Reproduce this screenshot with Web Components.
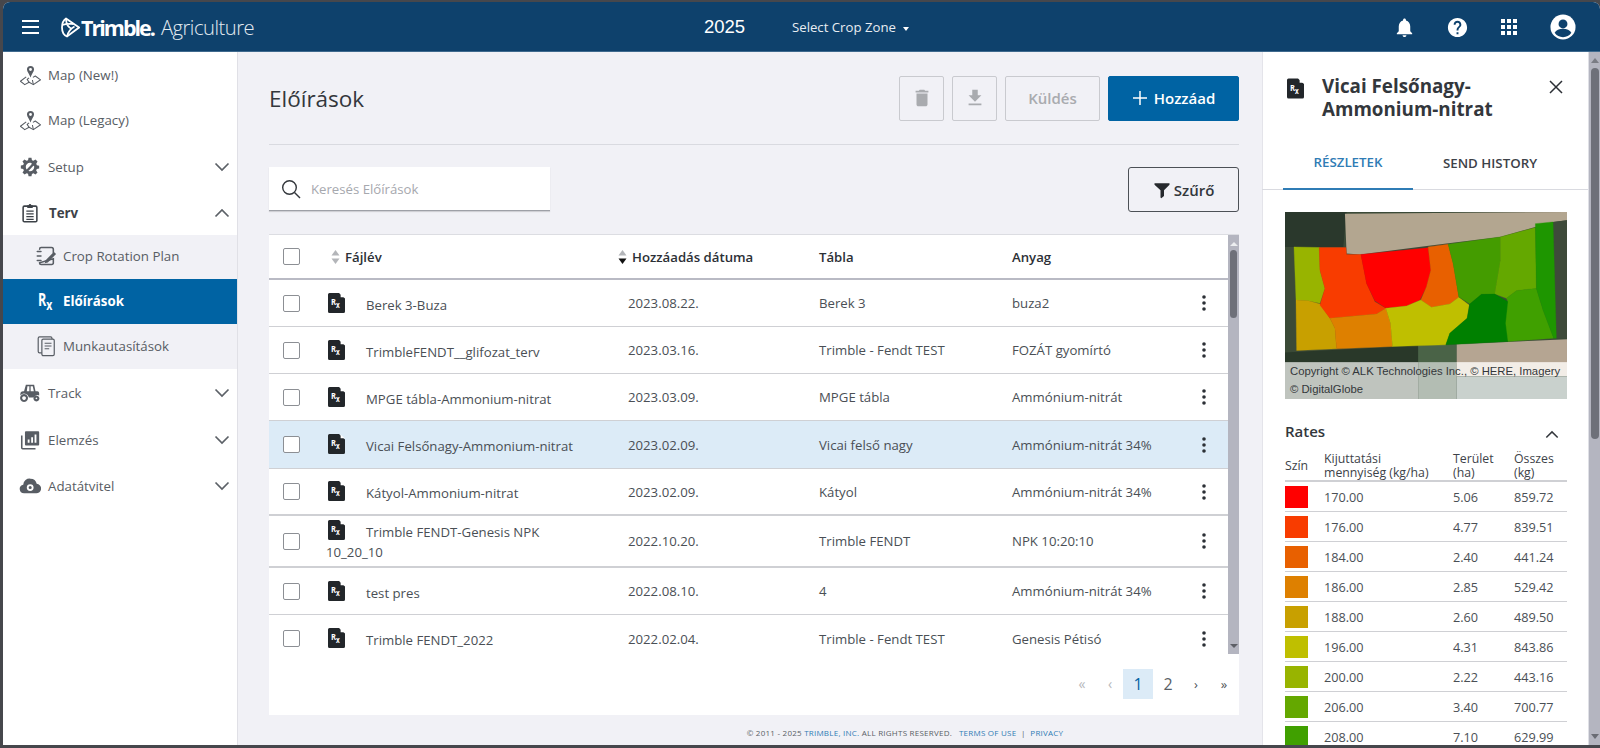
<!DOCTYPE html>
<html lang="hu"><head><meta charset="utf-8"><title>Előírások</title>
<style>
html,body{margin:0;height:100%;overflow:hidden;background:#46474c;font-family:"Open Sans",sans-serif;color:#464b52}
</style></head><body>
<tm-app></tm-app>
<script>
const I={
 bell:'<path d="M12 22c1.1 0 2-.9 2-2h-4c0 1.1.9 2 2 2zm6-6v-5c0-3.07-1.63-5.64-4.5-6.32V4c0-.83-.67-1.5-1.5-1.5s-1.5.67-1.5 1.5v.68C7.64 5.36 6 7.92 6 11v5l-2 2v1h16v-1l-2-2z"/>',
 help:'<path d="M12 2C6.48 2 2 6.48 2 12s4.48 10 10 10 10-4.48 10-10S17.52 2 12 2zm1 17h-2v-2h2v2zm2.07-7.75l-.9.92C13.45 12.9 13 13.5 13 15h-2v-.5c0-1.1.45-2.1 1.17-2.83l1.24-1.26c.37-.36.59-.86.59-1.41 0-1.1-.9-2-2-2s-2 .9-2 2H8c0-2.21 1.79-4 4-4s4 1.79 4 4c0 .88-.36 1.68-.93 2.25z"/>',
 apps:'<path d="M4 8h4V4H4v4zm6 12h4v-4h-4v4zm-6 0h4v-4H4v4zm0-6h4v-4H4v4zm6 0h4v-4h-4v4zm6-10v4h4V4h-4zm-6 4h4V4h-4v4zm6 6h4v-4h-4v4zm0 6h4v-4h-4v4z"/>',
 trash:'<path d="M6 19c0 1.1.9 2 2 2h8c1.1 0 2-.9 2-2V7H6v12zM19 4h-3.5l-1-1h-5l-1 1H5v2h14V4z"/>',
 dl:'<path d="M19 9h-4V3H9v6H5l7 7 7-7zM5 18v2h14v-2H5z"/>',
 filter:'<path d="M2 3h20v2l-7.300 7.300V20L11 23l-1-1V12.300L2 5z"/>',
 map:'<g fill="none" stroke="currentColor" stroke-width="1.1" stroke-linejoin="round"><path d="M7.500 13.500 1.500 18l4.500 3.500 4.500-2.500 4.500 2.500 7.500-5-5.500-4-2.500 1.500"/><path d="M10.500 19 8.500 16l2-1.500M15 21.500l-1-4.800"/></g><path fill="currentColor" d="M12 2a3.700 3.700 0 0 1 3.700 3.700c0 2.300-2.700 5-3.700 8.300-1-3.300-3.700-6-3.700-8.300A3.700 3.700 0 0 1 12 2zm0 2.200a1.500 1.500 0 1 0 0 3 1.500 1.500 0 0 0 0-3z"/>',
 setup:'<path fill="currentColor" d="M10.400 2h3.200l.5 2.600 1.600.7 2.300-1.400 2.200 2.200-1.400 2.300.7 1.600 2.500.5v3.200l-2.600.5-.7 1.600 1.500 2.200-2.200 2.300-2.300-1.500-1.600.7-.5 2.500h-3.200l-.5-2.600-1.600-.7-2.200 1.500-2.300-2.300 1.500-2.200-.7-1.600L2 13.600v-3.200l2.600-.5.7-1.600-1.500-2.300L6 3.800l2.300 1.500 1.600-.7zM12 7.400a4.600 4.600 0 1 0 0 9.200 4.600 4.600 0 0 0 0-9.200z"/><path fill="none" stroke="currentColor" stroke-width="2.600" d="M7 18 15.500 9"/><circle cx="16" cy="8.400" r="2.300" fill="currentColor"/>',
 clip:'<g fill="none" stroke="currentColor" stroke-width="1.700"><rect x="4.500" y="4.500" width="15" height="17" rx="1.400"/><path stroke-width="1.200" d="M8 10h8M8 13h8M8 16h8M8 19h8"/></g><path fill="currentColor" d="M9 5V3.500h1.600a1.400 1.400 0 0 1 2.800 0H15v3H9z"/>',
 crop:'<g fill="none" stroke="currentColor" stroke-width="1.700" stroke-linecap="round"><path d="M5 4.500A1.700 1.700 0 0 1 6.700 2.800H18A2 2 0 0 1 20 4.800V9M20 15v4.500a1.700 1.700 0 0 1-1.700 1.700H6.700A1.700 1.700 0 0 1 5 19.500z"/><path d="M2.500 7h4M2.500 12h4M2.500 17h4"/></g><path fill="currentColor" d="M20.600 7.500 23 9.900 14 19l-3.400 1 1-3.400z"/>',
 docs:'<g fill="none" stroke="currentColor" stroke-width="1.300"><rect x="7.500" y="4.500" width="13.500" height="18" rx="1.500"/><path d="M7.500 19.500H5a1.500 1.500 0 0 1-1.500-1.500V3.500A1.500 1.500 0 0 1 5 2h12a1.500 1.500 0 0 1 1.500 1.500v1"/><path d="M10.500 9h7.500M10.500 12h7.500M10.500 15h5"/></g>',
 tractor:'<path fill="currentColor" d="M7.500 3h9l1.500 7h2a2 2 0 0 1 2 2v2.600a4 4 0 0 0-5.500 2.400h-5.700a5.300 5.300 0 0 0-9.300-2.400V13a3 3 0 0 1 3-3h1zm1.700 1.600L8.500 10h2.800V4.600zm3.500 0V10h3.500l-1.200-5.400z"/><path fill="none" stroke="currentColor" stroke-width="2.300" d="M5.500 14.300a3.200 3.200 0 1 0 .01 0zM19 15.800a2.100 2.100 0 1 0 .01 0z"/>',
 chart:'<path fill="none" stroke="currentColor" stroke-width="1.700" d="M3 7v13.500a1 1 0 0 0 1 1h14"/><path fill="currentColor" d="M7.500 2.500H21a1 1 0 0 1 1 1V17a1 1 0 0 1-1 1H7.500a1 1 0 0 1-1-1V3.500a1 1 0 0 1 1-1zM9.500 11.500V15H11.500v-3.500zM13.300 9V15h2V9zM17 6v9h2V6z" fill-rule="evenodd"/>',
 cloud:'<path fill="currentColor" fill-rule="evenodd" d="M12.500 4a7 7 0 0 1 6.800 5.600A5.200 5.200 0 0 1 18.500 20H5.500a4.800 4.800 0 0 1-.9-9.500A7 7 0 0 1 12.500 4zm-.3 6a3.700 3.700 0 1 0 0 7.400 3.700 3.700 0 0 0 0-7.400zm0 2a1.700 1.700 0 1 1 0 3.400 1.700 1.700 0 0 1 0-3.400z"/>'
};
const svg=(n,s=24,extra='')=>`<svg width="${s}" height="${s}" viewBox="0 0 24 24" fill="currentColor" ${extra}>${I[n]}</svg>`;
const chev=d=>`<svg width="16" height="10" viewBox="0 0 16 10" fill="none" stroke="currentColor" stroke-width="1.700"><path d="${d=='up'?'M1.500 8.500 8 2l6.500 6.500':'M1.500 1.500 8 8l6.500-6.500'}"/></svg>`;
const rxDoc=(w,h)=>`<svg width="${w}" height="${h}" viewBox="0 0 17 20" aria-hidden="true"><path fill="#22262a" d="M1.500 0H11l6 5.500V18.500a1.500 1.500 0 0 1-1.500 1.500H1.500A1.500 1.500 0 0 1 0 18.500V1.500A1.500 1.500 0 0 1 1.500 0z"/><path fill="#fff" d="M12.600 0.400 16.800 4.300H12.600z"/><text transform="translate(3 12) scale(.8 1)" font-family="Open Sans" font-weight="700" font-size="9.500" fill="#fff">R<tspan dy="3" font-size="8">x</tspan></text></svg>`;
class Base extends HTMLElement{
 constructor(){super();this.attachShadow({mode:'open'})}
 connectedCallback(){this.shadowRoot.innerHTML=`<style>${this.css()}</style>${this.html()}`}
 css(){return ':host{display:block}'} html(){return '<slot></slot>'}
 a(n,d=''){return this.getAttribute(n)??d}
}
const def=(n,c)=>customElements.define(n,c);

def('tm-app',class extends Base{
 css(){return `:host{display:flex;flex-direction:column;height:743px;margin:2px 0 0 3px;background:#fff;border-radius:7px 7px 0 0;overflow:hidden}
 .b{display:flex;flex:1;min-height:0}`}
 html(){return `<tm-header></tm-header><div class="b"><tm-sidebar></tm-sidebar><tm-main></tm-main><tm-detail></tm-detail><tm-vscroll></tm-vscroll></div>`}
});

def('tm-header',class extends Base{
 css(){return `:host{display:flex;align-items:center;height:50px;background:#0e416c;color:#fff;flex:none;box-shadow:inset 0 -1px 0 #3f6a8e}
 .ham{margin-left:19px;display:flex;flex-direction:column;gap:4px;width:17px}
 .ham i{display:block;height:2px;background:#fff}
 .logo{margin-left:22px;display:flex;align-items:center;width:194px;flex:none}
 .logo svg{flex:none}
 .tr{font-weight:700;font-size:21.500px;letter-spacing:-2px;margin-left:1px}
 .ag{font-weight:300;font-size:20.200px;letter-spacing:-.500px;margin-left:7px;color:#e4ebf1}
 .yr{font:18.500px "Liberation Sans",sans-serif;margin-left:449px;width:42px}
 .cz{margin-left:46px;font-size:13.200px;font-weight:500;color:#e8edf2;display:flex;align-items:center;white-space:nowrap}
 .cz i{margin-left:7px;border:3.500px solid transparent;border-top:4px solid #fff;margin-top:4px;border-bottom:0}
 .r{margin-left:auto;display:flex;align-items:center;color:#fff;margin-right:24px}
 .r svg{display:block}`}
 html(){return `<div class="ham"><i></i><i></i><i></i></div>
 <div class="logo"><svg width="19" height="21" viewBox="0 0 19 21" fill="none" stroke="#fff" stroke-width="1.800"><path d="M5 1.500 18 10.500 6 19.500C2.500 18 1 14.500 1 10.500S2 3.500 5 1.500z"/><path d="M5 1.500C5 7 6.500 10 11 12M1.500 8C5 6.500 9 7 12.500 7M6 19.500C7 15 9 12 13.500 9.500"/></svg><span class="tr">Trimble.</span><span class="ag">Agriculture</span></div>
 <div class="yr">2025</div><div class="cz">Select Crop Zone<i></i></div>
 <div class="r">${svg('bell',23,'style="margin-right:30px"')}${svg('help',23,'style="margin-right:28px"')}${svg('apps',24,'style="margin-right:29px"')}<svg width="26" height="26" viewBox="0 0 28 28"><circle cx="14" cy="14" r="13.500" fill="#fff"/><circle cx="14" cy="10.700" r="4.800" fill="#0e416c"/><path fill="#0e416c" d="M5 20.300c1.500-3 5-4.300 9-4.300s7.500 1.300 9 4.300A11 11 0 0 1 14 25a11 11 0 0 1-9-4.700z"/></svg></div>`}
});

def('tm-nav',class extends Base{
 css(){const s=this.hasAttribute('sub');return `:host{display:flex;align-items:center;height:${this.a('h','46')}px;font-size:13.300px;color:#585d64;flex:none;box-sizing:border-box;padding:0 7px ${this.a('pb','0')}px ${s?'28px':'12px'}}
 :host([sub]){background:#f1f1f6}
 :host([active]){background:#0063a3;color:#fff;font-weight:700}
 :host([open]){font-weight:700;color:#3d4248}
 .ic{width:${s?'29':'30'}px;margin-right:3px;display:flex;justify-content:center;flex:none}
 :host([open]) .ic{margin-right:4px}
 .ch{margin-left:auto;color:#5c6167;display:flex;width:16px}`}
 html(){const i=this.a('icon');const ic=i=='rx'?`<svg width="20" height="30" viewBox="0 0 20 30"><text transform="translate(2 20) scale(.7 1)" font-family="Open Sans" font-weight="700" font-size="18" fill="#fff">R<tspan dy="4" font-size="15">x</tspan></text></svg>`:svg(i,i=='map'?23:22);
 const c=this.a('chev');return `<span class="ic">${ic}</span><slot></slot>${c?`<span class="ch">${chev(c)}</span>`:''}`}
});

def('tm-sidebar',class extends Base{
 css(){return `:host{width:234px;flex:none;background:#fff;display:flex;flex-direction:column}`}
 html(){return `<tm-nav icon="map" h="46">Map (New!)</tm-nav><tm-nav icon="map" h="45" pb="1">Map (Legacy)</tm-nav>
 <tm-nav icon="setup" h="47" chev="down">Setup</tm-nav><tm-nav icon="clip" h="45" chev="up" open>Terv</tm-nav>
 <tm-nav sub icon="crop" h="44" pb="2">Crop Rotation Plan</tm-nav><tm-nav sub active icon="rx" h="45" pb="2">Előírások</tm-nav><tm-nav sub icon="docs" h="45" pb="2">Munkautasítások</tm-nav>
 <tm-nav icon="tractor" h="48" chev="down">Track</tm-nav><tm-nav icon="chart" h="46" chev="down">Elemzés</tm-nav><tm-nav icon="cloud" h="46" chev="down">Adatátvitel</tm-nav>`}
});

def('tm-btn',class extends Base{
 css(){return `:host{display:flex;align-items:center;justify-content:center;box-sizing:border-box;height:45px;border-radius:2px;border:1px solid #c9cacf;color:#a9abaf;font-size:15px;font-weight:600;gap:6px;white-space:nowrap;width:${this.a('w')}px;background:#f1f1f6}
 :host([primary]){background:#0063a3;border-color:#0063a3;color:#fff}
 :host([outline]){border-color:#4c5056;color:#33373c;background:transparent;border-radius:3px}
 svg{display:block}`}
 html(){return `<slot name="i"></slot><slot></slot>`}
});

def('tm-check',class extends Base{
 css(){return `:host{display:block;width:17px;height:17px;box-sizing:border-box;border:1.500px solid #8c8f94;border-radius:2px;background:#fff;flex:none}`}
 html(){return ''}
});

const kebab=`<svg width="4" height="16" viewBox="0 0 4 16" fill="#2c3036"><circle cx="2" cy="2" r="1.800"/><circle cx="2" cy="8" r="1.800"/><circle cx="2" cy="14" r="1.800"/></svg>`;
const COLS='57px 290px 203px 193px 181px 46px';
def('tm-row',class extends Base{
 css(){return `:host{display:grid;grid-template-columns:${COLS};align-items:center;box-sizing:border-box;height:${this.a('h','47')}px;border-bottom:${this.a('b','1')}px solid #cfd0d4;font-size:13.200px;color:#4a4f55;background:#fff}
 :host([sel]){background:#dcebf7}
 .c{padding-left:14px}
 .n{line-height:20px;padding:${this.hasAttribute('wrap')?'0':'1px'} 26px 0 0}
 .n svg{vertical-align:-3px;margin:0 21px 0 2px}
 .d{padding-left:12px}.k{display:flex;justify-content:center;margin-left:-24px}`}
 html(){return `<div class="c"><tm-check></tm-check></div><div class="n">${rxDoc(17,20)}<slot></slot></div><div class="d">${this.a('date')}</div><div>${this.a('field')}</div><div>${this.a('prod')}</div><div class="k">${kebab}</div>`}
});

const sort=(act)=>`<svg width="9" height="14" viewBox="0 0 9 14"><path fill="#b3b5b9" d="M4.500 0 8.500 5.600H.5z"/><path fill="${act?'#111':'#b3b5b9'}" d="M4.500 14 .5 8.400h8z"/></svg>`;
def('tm-thead',class extends Base{
 css(){return `:host{display:grid;grid-template-columns:${COLS};align-items:center;box-sizing:border-box;height:45px;border-bottom:2px solid #b9bac4;font-size:13.200px;font-weight:600;color:#2c3036;background:#fff}
 .c{padding-left:14px}.x{display:flex;align-items:center;gap:5px}.f{padding-left:5px}.d{padding-left:2px}`}
 html(){return `<div class="c"><tm-check></tm-check></div><div class="x f">${sort()}Fájlév</div><div class="x d">${sort(1)}Hozzáadás dátuma</div><div>Tábla</div><div>Anyag</div><div></div>`}
});

def('tm-tscroll',class extends Base{
 css(){return `:host{width:11px;background:#b4b5c0;display:flex;flex-direction:column;align-items:center;flex:none}
 .u,.d{border:4px solid transparent;flex:none}.u{border-bottom:4px solid #eceef0;border-top:0;margin-top:7px}
 .t{width:7px;height:68px;border-radius:4px;background:#6e7079;margin-top:4px}
 .d{margin-top:auto;border-top:4px solid #5d5f66;border-bottom:0;margin-bottom:6px}`}
 html(){return `<i class="u"></i><i class="t"></i><i class="d"></i>`}
});

def('tm-vscroll',class extends Base{
 css(){return `:host{width:12px;background:#b4b5c0;display:flex;flex-direction:column;align-items:center;flex:none;border-left:1px solid #dfe0e6;box-sizing:border-box}
 .u,.d{border:4.500px solid transparent;flex:none}.u{border-bottom:5px solid #7a7c84;border-top:0;margin-top:6px}
 .t{width:8px;height:371px;border-radius:4px;background:#6e7079;margin-top:5px}
 .d{margin-top:auto;border-top:5px solid #6a6c74;border-bottom:0;margin-bottom:6px}`}
 html(){return `<i class="u"></i><i class="t"></i><i class="d"></i>`}
});

def('tm-pager',class extends Base{
 css(){return `:host{display:flex;justify-content:flex-end;align-items:center;height:60px;background:#fff;font-size:16px;color:#5a5f66;box-sizing:border-box}
 span{width:30px;height:30px;display:flex;align-items:center;justify-content:center;margin-top:-1px}
 .w{width:26px}
 .m{color:#b6b8bc;font-size:14px}.n{color:#4f5459;font-size:13px}
 .a{background:#dcebf7;color:#0063a3}`}
 html(){return `<span class="m">«</span><span class="m w">‹</span><span class="a">1</span><span>2</span><span class="n w">›</span><span class="n">»</span>`}
});

def('tm-main',class extends Base{
 css(){return `:host{flex:1;min-width:0;background:#f1f1f6;padding:0 23px 0 32px;display:flex;flex-direction:column;box-sizing:border-box;box-shadow:inset 1px 0 0 #e0e0e6}
 .top{display:flex;align-items:center;height:93px;border-bottom:1px solid #d9dae0;box-sizing:border-box;flex:none;margin-bottom:22px}
 h1{font-size:22.500px;font-weight:400;color:#33373c;margin:0 auto 0 0}
 .btns{display:flex;gap:8px}
 .bar{display:flex;justify-content:space-between;flex:none;height:45px;margin-bottom:22px}
 .s{width:281px;height:44px;background:#fff;border-bottom:1px solid #9ea0a7;display:flex;align-items:center;gap:10px;padding-left:12px;box-sizing:border-box;font-size:13.200px;color:#a6a8ae;box-shadow:0 1px 1px #0002}
 .card{display:flex;flex-direction:column;background:#fff;flex:none;height:480px;border-top:1px solid #dcdde2}
 .tw{display:flex;height:419px;flex:none}.rows{flex:1;min-width:0;overflow:hidden}
 .ft{text-align:center;font-size:8px;color:#5a5f66;margin-top:12px;white-space:pre;letter-spacing:.03em;padding-left:302px}.ft a{color:#2f7cb5;text-decoration:none}`}
 html(){return `<div class="top"><h1>Előírások</h1><div class="btns">
 <tm-btn w="45">${svg('trash',22,'slot="i"')}</tm-btn><tm-btn w="45">${svg('dl',22,'slot="i"')}</tm-btn><tm-btn w="95">Küldés</tm-btn>
 <tm-btn w="131" primary><svg slot="i" width="16" height="16" viewBox="0 0 16 16" stroke="#fff" stroke-width="1.500"><path d="M8 1v14M1 8h14"/></svg>Hozzáad</tm-btn></div></div>
 <div class="bar"><div class="s"><svg width="20" height="20" viewBox="0 0 20 20" fill="none" stroke="#33373c" stroke-width="1.400"><circle cx="8.500" cy="8.500" r="6.800"/><path d="m13.500 13.500 5.500 5.500"/></svg>Keresés Előírások</div>
 <tm-btn w="111" outline>${svg('filter',18,'slot="i" style="color:#26292d;margin-right:-3px"')}Szűrő</tm-btn></div>
 <div class="card"><div class="tw"><div class="rows"><tm-thead></tm-thead>
 <tm-row date="2023.08.22." field="Berek 3" prod="buza2">Berek 3-Buza</tm-row>
 <tm-row date="2023.03.16." field="Trimble - Fendt TEST" prod="FOZÁT gyomírtó">TrimbleFENDT__glifozat_terv</tm-row>
 <tm-row date="2023.03.09." field="MPGE tábla" prod="Ammónium-nitrát">MPGE tábla-Ammonium-nitrat</tm-row>
 <tm-row sel h="48" date="2023.02.09." field="Vicai felső nagy" prod="Ammónium-nitrát 34%">Vicai Felsőnagy-Ammonium-nitrat</tm-row>
 <tm-row date="2023.02.09." field="Kátyol" prod="Ammónium-nitrát 34%" b="2">Kátyol-Ammonium-nitrat</tm-row>
 <tm-row wrap h="52" b="2" date="2022.10.20." field="Trimble FENDT" prod="NPK 10:20:10">Trimble FENDT-Genesis NPK<br>10_20_10</tm-row>
 <tm-row date="2022.08.10." field="4" prod="Ammónium-nitrát 34%">test pres</tm-row>
 <tm-row h="47" b="0" date="2022.02.04." field="Trimble - Fendt TEST" prod="Genesis Pétisó">Trimble FENDT_2022</tm-row>
 </div><tm-tscroll></tm-tscroll></div><tm-pager></tm-pager></div>
 <div class="ft">© 2011 - 2025 <a>TRIMBLE, INC.</a> ALL RIGHTS RESERVED.   <a>TERMS OF USE</a>  |  <a>PRIVACY</a></div>`}
});

def('tm-map',class extends Base{
 css(){return `:host{display:block;position:relative;width:282px;height:187px;overflow:hidden;background:#c8d0cc}
 svg{display:block;filter:blur(.4px)}
 .at{position:absolute;left:0;right:0;bottom:0;padding:0 0 0 5px;font:11.300px/18px "Liberation Sans",sans-serif;color:#33373a;height:37px}`}
 html(){const P=[
 ['#98b400','102,140 178,142 180,210 195,265 180,310 145,302 108,300'],
 ['#c8a000','108,300 145,302 180,312 210,355 225,385 230,447 110,452'],
 ['#f83c00','178,142 258,142 260,163 303,163 320,250 345,305 378,325 350,342 210,355 180,315 195,265 180,210'],
 ['#ff0000','303,163 505,143 513,210 500,260 480,300 440,318 378,324 345,302 320,250'],
 ['#e86000','505,140 565,132 580,190 597,292 570,312 515,322 483,300 500,260 513,210'],
 ['#de8000','210,355 350,342 378,325 392,370 398,440 230,447 225,385'],
 ['#bfbf00','378,325 440,318 483,300 515,322 570,312 597,292 628,315 622,355 570,400 558,435 398,440 392,370'],
 ['#449c00','565,132 722,110 722,180 705,282 665,283 630,312 597,290 580,190'],
 ['#64a800','722,110 827,82 830,265 770,272 740,295 705,282 722,180'],
 ['#008000','630,312 665,283 705,282 745,305 740,370 745,425 558,435 570,400 622,355'],
 ['#40a000','740,295 770,272 830,265 850,330 882,415 745,425 738,370 745,305'],
 ['#1e9600','827,70 880,65 890,415 882,415 850,330 830,265']].map(([c,p])=>`<polygon fill="${c}" stroke="${c}" points="${p}"/>`).join('');
 return `<svg width="282" height="187" viewBox="75 35 847 563" preserveAspectRatio="none">
 <rect x="75" y="35" width="847" height="563" fill="#3b4a38"/>
 <polygon fill="#2a382c" points="75,35 260,35 250,140 75,140"/>
 <polygon fill="#b3a690" points="255,40 922,35 922,60 880,65 720,110 560,130 300,163 260,160"/>
 <polygon fill="#3e4a3a" points="880,65 922,60 922,415 890,415"/>
 <polygon fill="#3b4a37" points="75,140 105,140 110,455 75,458"/>
 <polygon fill="#b5a592" points="590,433 922,418 922,490 590,490"/>
 <polygon fill="#293829" points="75,458 475,437 475,490 75,490"/>
 <polygon fill="#4a6347" points="475,437 590,433 590,490 475,490"/>
 ${P}
 <rect x="75" y="487" width="400" height="111" fill="#bfc4be"/><rect x="475" y="487" width="115" height="111" fill="#b3bdb3"/>
 <rect x="590" y="487" width="332" height="43" fill="#f2ede7"/><rect x="590" y="530" width="332" height="68" fill="#c9d1cd"/>
 </svg><div class="at">Copyright © ALK Technologies Inc., © HERE, Imagery © DigitalGlobe</div>`}
});

def('tm-rates',class extends Base{
 css(){return `:host{display:block;font-size:12.700px;color:#4a4f55}
 .h{display:flex;justify-content:space-between;align-items:center;height:24px;color:#33373c;font-size:15px;font-weight:600;padding-right:8px}
 .h svg{margin-top:6px}
 .g{display:grid;grid-template-columns:39px 129px 61px 53px}
 .th{font-size:12.300px;line-height:14px;display:flex;align-items:center;height:33px;font-weight:500;color:#3d4248;border-bottom:2px solid #cfd0d4;margin-top:6px;padding-top:3px;box-sizing:border-box}
 .td{height:30px;border-bottom:1px solid #cfd0d4;box-sizing:border-box;display:flex;align-items:center}
 .sw{width:23px;height:22px;display:block}`}
 html(){const R=[['#ff0000','170.00','5.06','859.72'],['#f83c00','176.00','4.77','839.51'],['#e86000','184.00','2.40','441.24'],['#de8000','186.00','2.85','529.42'],['#c8a000','188.00','2.60','489.50'],['#bfbf00','196.00','4.31','843.86'],['#98b400','200.00','2.22','443.16'],['#64a800','206.00','3.40','700.77'],['#40a000','208.00','7.10','629.99']];
 return `<div class="h"><span>Rates</span>${chev('up').replace('width="16"','width="14"').replace('height="10"','height="9"')}</div>
 <div class="g"><div class="th">Szín</div><div class="th"><span>Kijuttatási<br>mennyiség (kg/ha)</span></div><div class="th"><span>Terület<br>(ha)</span></div><div class="th"><span>Összes<br>(kg)</span></div>
 ${R.map(r=>`<div class="td"><i class="sw" style="background:${r[0]}"></i></div><div class="td">${r[1]}</div><div class="td">${r[2]}</div><div class="td">${r[3]}</div>`).join('')}</div>`}
});

def('tm-detail',class extends Base{
 css(){return `:host{width:326px;flex:none;background:#fff;display:flex;flex-direction:column;overflow:hidden;box-shadow:inset 1px 0 0 #e4e4ea}
 .t{display:flex;padding:24px 25px 0 25px;height:86px;box-sizing:border-box;flex:none}
 .t svg.rx{margin:2px 18px 0 0;flex:none}
 .ti{font-size:18.800px;font-weight:700;line-height:23px;color:#33373c;width:204px;margin-top:-1px}
 .x{margin-left:auto;margin-top:4px}
 .tabs{display:flex;height:52px;border-bottom:1px solid #d9dae0;flex:none;margin-bottom:22px;box-sizing:border-box;padding-left:21px;font-size:13.300px;font-weight:600}
 .tabs div{display:flex;align-items:center;justify-content:center;height:52px;padding-bottom:2px;box-sizing:border-box}
 .a{width:130px;color:#2f7cb5;border-bottom:2px solid #2f7cb5}.o{width:154px;color:#3d4248}
 .c{padding:0 21px 0 23px}.sp{height:20px}`}
 html(){return `<div class="t">${rxDoc(17,21).replace('<svg','<svg class="rx"')}<div class="ti">Vicai Felsőnagy-Ammonium-nitrat</div><svg class="x" width="14" height="14" viewBox="0 0 14 14" stroke="#2c3036" stroke-width="1.500"><path d="m1 1 12 12M13 1 1 13"/></svg></div>
 <div class="tabs"><div class="a">RÉSZLETEK</div><div class="o">SEND HISTORY</div></div>
 <div class="c"><tm-map></tm-map><div class="sp"></div><tm-rates></tm-rates></div>`}
});
</script></body></html>
